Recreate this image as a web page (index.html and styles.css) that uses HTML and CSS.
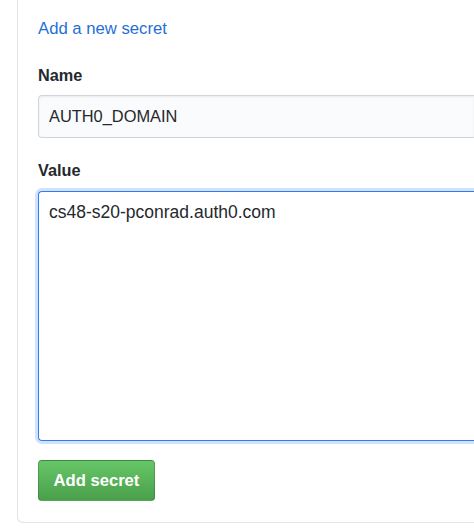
FILE: index.html
```html
<!DOCTYPE html>
<html>
<head>
<meta charset="utf-8">
<link rel="stylesheet" href="styles.css">
</head>
<body>
<div class="card">
  <a class="title" href="#">Add a new secret</a>
  <form class="form">
    <label class="label" for="name">Name</label>
    <input class="input" id="name" type="text" value="AUTH0_DOMAIN">
    <label class="label label-value" for="value">Value</label>
    <textarea class="textarea" id="value">cs48-s20-pconrad.auth0.com</textarea>
    <div class="actions">
      <button class="btn" type="button">Add secret</button>
    </div>
  </form>
</div>
</body>
</html>
```

FILE: styles.css
```css
html, body {
  margin: 0;
  padding: 0;
  background: #ffffff;
  overflow: hidden;
}

body {
  width: 474px;
  height: 530px;
  font-family: "Liberation Sans", Arial, sans-serif;
  color: #24292e;
}

.card {
  margin-top: -20px;
  margin-left: 17px;
  width: 457px;
  border: 1px solid #e1e4e8;
  border-right: 0;
  border-radius: 6px 0 0 6px;
  padding: 36px 0 21px 20px;
  box-sizing: border-box;
}

.title {
  display: block;
  font-size: 16.7px;
  line-height: 24px;
  color: #1f6fd8;
  text-decoration: none;
  margin-bottom: 23px;
}

.form {
  display: flex;
  flex-direction: column;
  align-items: flex-start;
}

.label {
  display: block;
  font-size: 16.3px;
  font-weight: bold;
  line-height: 22px;
  margin-bottom: 9px;
  color: #24292e;
}

.label-value {
  margin-top: 21px;
  margin-bottom: 10px;
}

.input {
  width: 100%;
  height: 43px;
  box-sizing: border-box;
  padding: 0 10px;
  font-family: "Liberation Sans", Arial, sans-serif;
  font-size: 16.4px;
  color: #24292e;
  background: #fafbfc;
  border: 1px solid #d1d5da;
  border-right: 0;
  border-radius: 4px 0 0 4px;
  box-shadow: inset 0 1px 2px rgba(27, 31, 35, 0.075);
  outline: none;
  margin: 0;
}

.textarea {
  width: 100%;
  height: 250px;
  box-sizing: border-box;
  padding: 9px 10px;
  font-family: "Liberation Sans", Arial, sans-serif;
  font-size: 17.5px;
  line-height: 22px;
  color: #24292e;
  background: #ffffff;
  border: 1px solid #2f7cf6;
  border-right: 0;
  border-radius: 4px 0 0 4px;
  box-shadow: 0 0 0 3px rgba(110, 160, 245, 0.3);
  outline: none;
  resize: none;
  margin: 0;
}

.actions {
  margin-top: 19px;
}

.btn {
  width: 117px;
  height: 41px;
  box-sizing: border-box;
  padding: 0;
  font-family: "Liberation Sans", Arial, sans-serif;
  font-size: 16.6px;
  font-weight: bold;
  color: #ffffff;
  background-image: linear-gradient(180deg, #66c666 0%, #4a9f4b 100%);
  border: 1px solid rgba(27, 31, 35, 0.2);
  border-radius: 4px;
  cursor: pointer;
}
```
